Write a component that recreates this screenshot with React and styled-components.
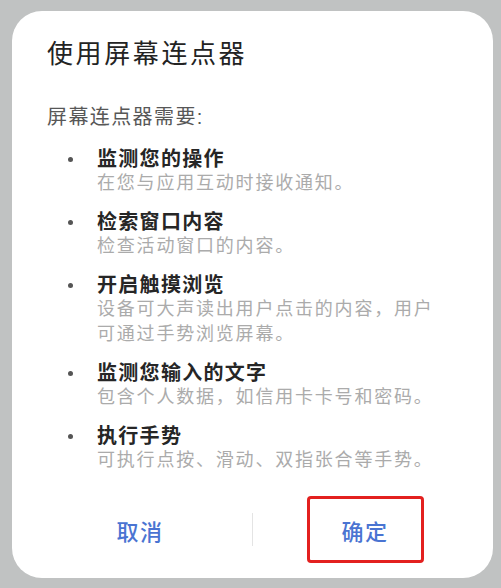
import React from 'react';
import styled, { createGlobalStyle } from 'styled-components';

const GlobalStyle = createGlobalStyle`
  html, body {
    margin: 0;
    padding: 0;
    background: #c0c2c2;
  }
  body {
    font-family: "Liberation Sans", "Noto Sans CJK SC", sans-serif;
  }
`;

const Page = styled.div`
  width: 501px;
  height: 588px;
  box-sizing: border-box;
  padding: 11px 8px 10px 12px;
  background: #c0c2c2;
`;

const Card = styled.div`
  height: 567px;
  box-sizing: border-box;
  background: #ffffff;
  border-radius: 30px;
  padding: 26px 16px 15px;
  display: flex;
  flex-direction: column;
`;

const Content = styled.div`
  padding-left: 19px;
`;

const Title = styled.h2`
  margin: 0;
  font-size: 26px;
  line-height: 34px;
  font-weight: 400;
  letter-spacing: 2.6px;
  color: #232323;
`;

const Intro = styled.p`
  margin: 32px 0 0;
  font-size: 20px;
  line-height: 28px;
  letter-spacing: 1.4px;
  color: #575757;
`;

const List = styled.ul`
  list-style: none;
  margin: 16px 0 0;
  padding: 0;
  display: flex;
  flex-direction: column;
  gap: 14px;
`;

const Item = styled.li`
  display: flex;
`;

const Bullet = styled.span`
  flex: 0 0 50px;
  height: 24px;
  display: flex;
  align-items: center;
  padding-left: 21px;
  box-sizing: border-box;

  &::before {
    content: '';
    width: 5px;
    height: 5px;
    border-radius: 50%;
    background: #555555;
  }
`;

const ItemText = styled.div`
  display: flex;
  flex-direction: column;
`;

const ItemTitle = styled.div`
  font-size: 20px;
  line-height: 24px;
  font-weight: 700;
  letter-spacing: 1.3px;
  color: #262626;
`;

const ItemDesc = styled.div`
  font-size: 18px;
  line-height: 25px;
  letter-spacing: 1.8px;
  color: #ababab;
`;

const Footer = styled.div`
  margin-top: auto;
  display: flex;
  align-items: center;
`;

const ButtonSlot = styled.div`
  flex: 1;
  display: flex;
  justify-content: center;
`;

const ActionButton = styled.button`
  width: 117px;
  height: 67px;
  box-sizing: border-box;
  border: 3px solid ${p => (p.$highlighted ? '#e3201f' : 'transparent')};
  border-radius: 4px;
  background: transparent;
  font-family: inherit;
  font-size: 22px;
  font-weight: 500;
  letter-spacing: 1.5px;
  color: #4a74d2;
  padding: 0;
  cursor: pointer;
`;

const Divider = styled.div`
  width: 1px;
  height: 33px;
  background: #e4e4e4;
`;

const permissions = [
  { title: '监测您的操作', desc: ['在您与应用互动时接收通知。'] },
  { title: '检索窗口内容', desc: ['检查活动窗口的内容。'] },
  {
    title: '开启触摸浏览',
    desc: ['设备可大声读出用户点击的内容，用户', '可通过手势浏览屏幕。'],
  },
  { title: '监测您输入的文字', desc: ['包含个人数据，如信用卡卡号和密码。'] },
  { title: '执行手势', desc: ['可执行点按、滑动、双指张合等手势。'] },
];

export default function App() {
  return (
    <>
      <GlobalStyle />
      <Page>
        <Card>
          <Content>
            <Title>使用屏幕连点器</Title>
            <Intro>屏幕连点器需要:</Intro>
            <List>
              {permissions.map(p => (
                <Item key={p.title}>
                  <Bullet />
                  <ItemText>
                    <ItemTitle>{p.title}</ItemTitle>
                    {p.desc.map(line => (
                      <ItemDesc key={line}>{line}</ItemDesc>
                    ))}
                  </ItemText>
                </Item>
              ))}
            </List>
          </Content>
          <Footer>
            <ButtonSlot>
              <ActionButton>取消</ActionButton>
            </ButtonSlot>
            <Divider />
            <ButtonSlot>
              <ActionButton $highlighted>确定</ActionButton>
            </ButtonSlot>
          </Footer>
        </Card>
      </Page>
    </>
  );
}
